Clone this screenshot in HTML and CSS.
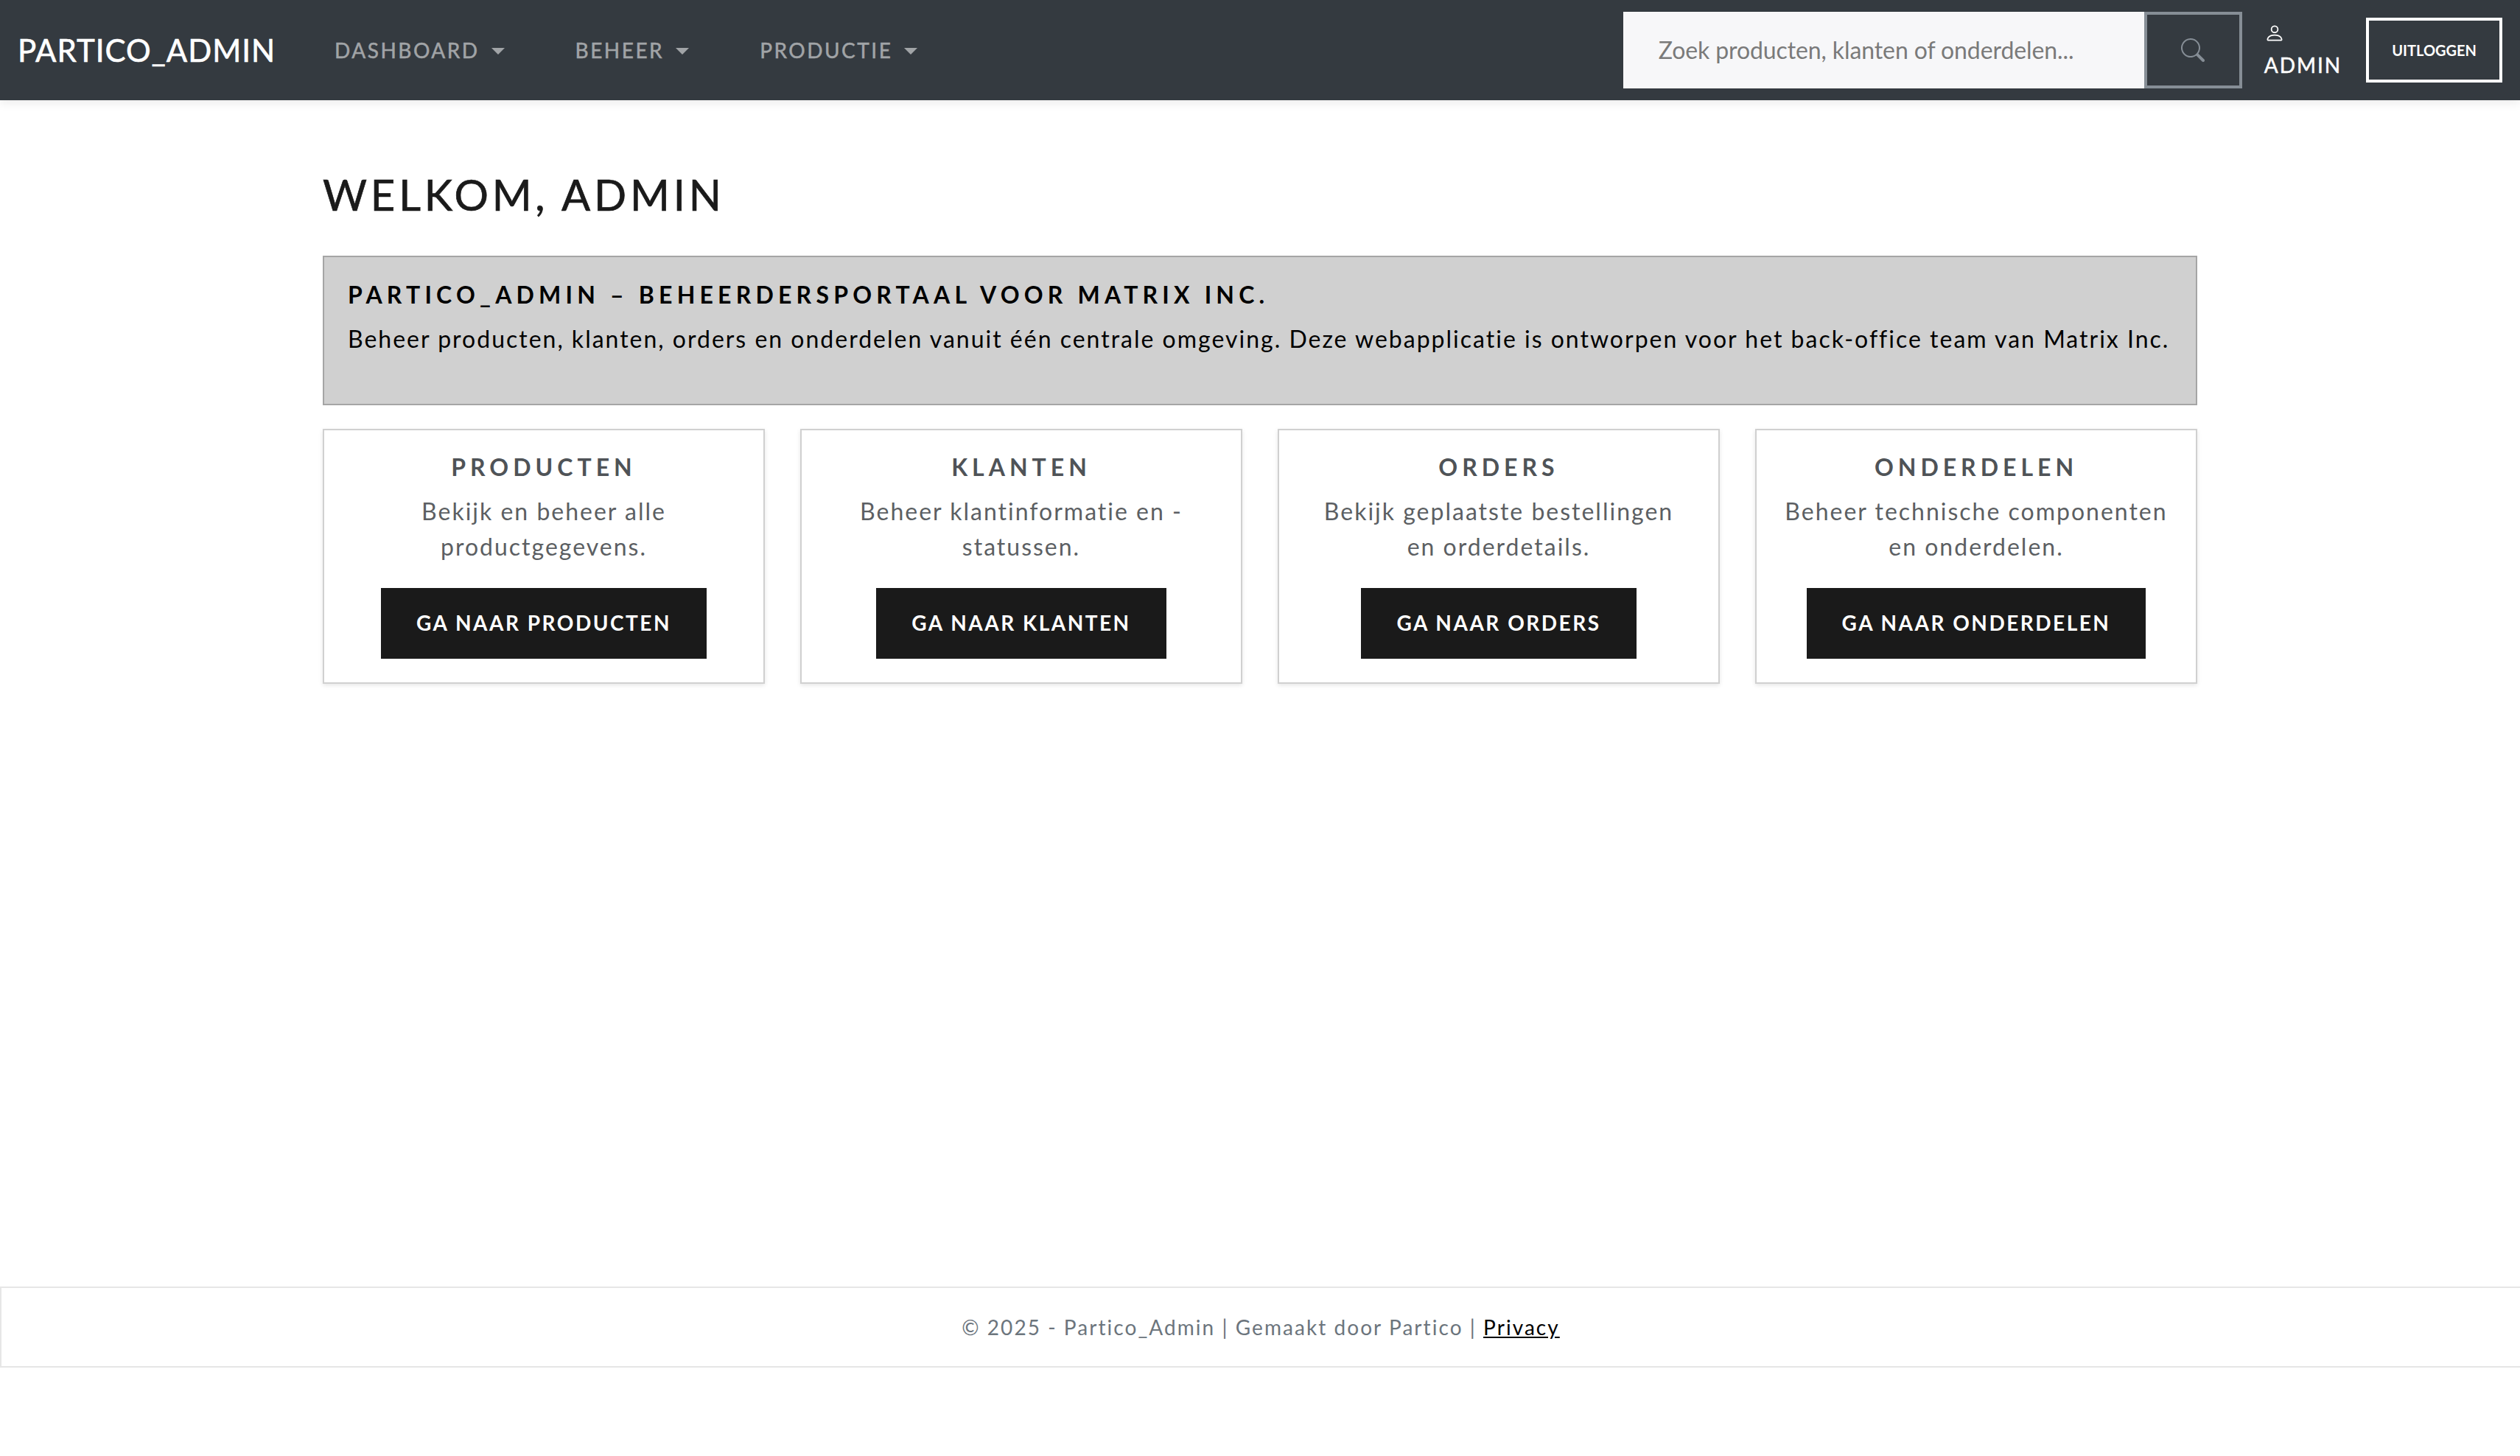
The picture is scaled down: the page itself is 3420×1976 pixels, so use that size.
FILE: index.html
```html
<!DOCTYPE html>
<html>
<head>
	<title>Partico_Admin</title>
	<link rel="stylesheet" href="styles.css">
</head>
<body>
	<nav class="navbar">
		<a class="brand" href="#">PARTICO_ADMIN</a>
		<ul class="nav-links">
			<li><a class="nav-link" href="#">DASHBOARD<span class="caret"></span></a></li>
			<li><a class="nav-link" href="#">BEHEER<span class="caret"></span></a></li>
			<li><a class="nav-link" href="#">PRODUCTIE<span class="caret"></span></a></li>
		</ul>
		<form class="search">
			<input class="search-input" type="text" placeholder="Zoek producten, klanten of onderdelen...">
			<button class="search-button" type="button">
				<svg class="icon-search" viewBox="0 0 16 16" fill="currentColor"><path d="M11.742 10.344a6.5 6.5 0 1 0-1.397 1.398h-.001c.03.04.062.078.098.115l3.85 3.85a1 1 0 0 0 1.415-1.414l-3.85-3.85a1.007 1.007 0 0 0-.115.1zM12 6.5a5.5 5.5 0 1 1-11 0 5.5 5.5 0 0 1 11 0z"/></svg>
			</button>
		</form>
		<div class="user">
			<svg class="icon-person" viewBox="0 0 16 16" fill="currentColor"><path d="M8 8a3 3 0 1 0 0-6 3 3 0 0 0 0 6Zm2-3a2 2 0 1 1-4 0 2 2 0 0 1 4 0Zm4 8c0 1-1 1-1 1H3s-1 0-1-1 1-4 6-4 6 3 6 4Zm-1-.004c-.001-.246-.154-.986-.832-1.664C11.516 10.68 10.289 10 8 10c-2.29 0-3.516.68-4.168 1.332-.678.678-.83 1.418-.832 1.664h10Z"/></svg>
			<span class="user-name">ADMIN</span>
		</div>
		<button class="logout" type="button">UITLOGGEN</button>
	</nav>

	<main class="container">
		<h1 class="page-title">WELKOM, ADMIN</h1>

		<div class="intro">
			<h4 class="intro-title">PARTICO_ADMIN – BEHEERDERSPORTAAL VOOR MATRIX INC.</h4>
			<p class="intro-text">Beheer producten, klanten, orders en onderdelen vanuit één centrale omgeving. Deze webapplicatie is ontworpen voor het back-office team van Matrix Inc.</p>
		</div>

		<div class="cards">
			<div class="card">
				<h5 class="card-title">PRODUCTEN</h5>
				<p class="card-text">Bekijk en beheer alle productgegevens.</p>
				<a class="card-button" href="#">GA NAAR PRODUCTEN</a>
			</div>
			<div class="card">
				<h5 class="card-title">KLANTEN</h5>
				<p class="card-text">Beheer klantinformatie en -statussen.</p>
				<a class="card-button" href="#">GA NAAR KLANTEN</a>
			</div>
			<div class="card">
				<h5 class="card-title">ORDERS</h5>
				<p class="card-text">Bekijk geplaatste bestellingen<br>en orderdetails.</p>
				<a class="card-button" href="#">GA NAAR ORDERS</a>
			</div>
			<div class="card">
				<h5 class="card-title">ONDERDELEN</h5>
				<p class="card-text">Beheer technische componenten en onderdelen.</p>
				<a class="card-button" href="#">GA NAAR ONDERDELEN</a>
			</div>
		</div>
	</main>

	<footer class="footer">
		<span>© 2025 - Partico_Admin | Gemaakt door Partico | <a class="footer-link" href="#">Privacy</a></span>
	</footer>
</body>
</html>
```

FILE: styles.css
```css
html, body {
	margin: 0;
	background: #fff;
	font-family: "Lato", "Noto Sans", sans-serif;
	font-size: 32px;
	color: #1a1a1a;
}

h1, h4, h5, p, ul {
	margin: 0;
	padding: 0;
}

a {
	text-decoration: none;
}

/* navbar */
.navbar {
	display: flex;
	align-items: center;
	height: 136px;
	box-sizing: border-box;
	padding: 0 24px;
	background: #343a40;
	box-shadow: 0 4px 12px rgba(0, 0, 0, 0.08);
}

.brand {
	color: #fff;
	font-size: 42px;
	letter-spacing: 1px;
	margin-right: 32px;
	-webkit-text-stroke: 0.6px #fff;
}

.nav-links {
	display: flex;
	list-style: none;
}

.nav-link {
	display: block;
	padding: 0 48px;
	color: #a1a4a7;
	font-size: 28px;
	letter-spacing: 2.5px;
	-webkit-text-stroke: 0.5px #a1a4a7;
}

.caret {
	display: inline-block;
	margin-left: 16px;
	vertical-align: 5px;
	border-top: 9px solid #a1a4a7;
	border-left: 9px solid transparent;
	border-right: 9px solid transparent;
}

.search {
	display: flex;
	margin-left: auto;
	height: 104px;
}

.search-input {
	width: 707px;
	box-sizing: border-box;
	padding: 0 48px 2px;
	border: 0;
	outline: none;
	background: #f7f7f9;
	font-family: inherit;
	font-size: 32px;
	letter-spacing: -0.1px;
}

.search-input::placeholder {
	color: #7a7a7a;
	opacity: 1;
}

.search-button {
	display: flex;
	align-items: center;
	justify-content: center;
	width: 133px;
	padding: 0;
	border: 4px solid #868e96;
	background: transparent;
	color: #868e96;
}

.icon-search {
	width: 32px;
	height: 32px;
}

.user {
	display: flex;
	flex-direction: column;
	margin-left: 30px;
	color: #fff;
}

.icon-person {
	width: 28px;
	height: 28px;
}

.user-name {
	margin-top: 12px;
	font-size: 28px;
	letter-spacing: 2px;
	-webkit-text-stroke: 0.5px #fff;
}

.logout {
	margin-left: 33px;
	height: 88px;
	padding: 0 31px;
	border: 4px solid #fff;
	background: transparent;
	color: #fff;
	font-family: inherit;
	font-size: 20px;
	font-weight: 700;
}

/* main */
.container {
	box-sizing: border-box;
	width: 2544px;
	height: 1610px;
	margin: 0 auto;
	padding-top: 94px;
}

.page-title {
	margin-bottom: 49px;
	font-size: 58px;
	font-weight: 400;
	line-height: 68px;
	letter-spacing: 4.8px;
	color: #1a1a1a;
	-webkit-text-stroke: 0.7px #1a1a1a;
}

.intro {
	padding: 32px;
	border: 2px solid #a5a5a5;
	background: #d0d0d0;
}

.intro-title {
	margin-bottom: 18px;
	font-size: 32px;
	font-weight: 700;
	line-height: 37px;
	letter-spacing: 6.2px;
	color: #000;
}

.intro-text {
	margin-bottom: 32px;
	line-height: 48px;
	letter-spacing: 2px;
	color: #000;
}

.cards {
	display: grid;
	grid-template-columns: repeat(4, 1fr);
	gap: 48px;
	margin-top: 32px;
}

.card {
	padding: 32px;
	border: 2px solid #d0d0d0;
	background: #fff;
	text-align: center;
	box-shadow: 0 2px 6px rgba(0, 0, 0, 0.1);
}

.card-title {
	margin-bottom: 18px;
	font-size: 32px;
	font-weight: 700;
	line-height: 36px;
	letter-spacing: 6px;
	color: #4f5357;
}

.card-text {
	margin-bottom: 32px;
	line-height: 48px;
	letter-spacing: 2px;
	color: #5c5f63;
}

.card-button {
	display: inline-block;
	padding: 0 48px 2px;
	line-height: 94px;
	background: #1a1a1a;
	color: #fff;
	font-size: 28px;
	font-weight: 700;
	letter-spacing: 2.5px;
}

/* footer */
.footer {
	display: flex;
	align-items: center;
	justify-content: center;
	box-sizing: border-box;
	height: 110px;
	border: 2px solid #e6e6e6;
	border-right: 0;
	color: #6c757d;
	font-size: 28px;
	letter-spacing: 2.05px;
}

.footer-link {
	color: #000;
	text-decoration: underline;
}
```
